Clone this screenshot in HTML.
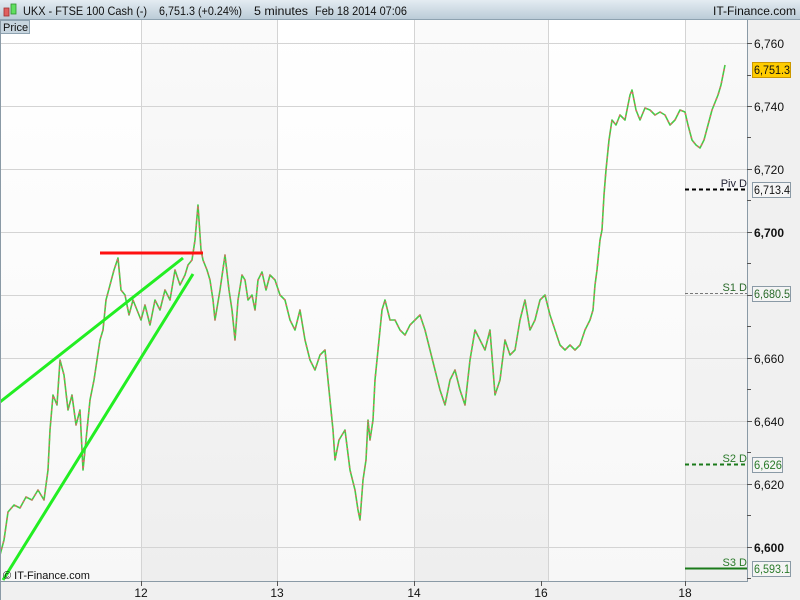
<!DOCTYPE html>
<html><head><meta charset="utf-8"><style>
body{margin:0;width:800px;height:600px;overflow:hidden;font-family:"Liberation Sans",sans-serif;background:#f0f0f0}
</style></head><body>
<svg width="800" height="600" xmlns="http://www.w3.org/2000/svg" style="display:block;font-family:'Liberation Sans',sans-serif">
<defs>
<linearGradient id="hd" x1="0" y1="0" x2="0" y2="1"><stop offset="0" stop-color="#e4ecf2"/><stop offset="1" stop-color="#b9cad6"/></linearGradient>
<linearGradient id="pl" x1="0" y1="0" x2="0" y2="1"><stop offset="0" stop-color="#ffffff"/><stop offset="1" stop-color="#f7f7f7"/></linearGradient>
<linearGradient id="sh" x1="0" y1="0" x2="0" y2="1"><stop offset="0" stop-color="#fafafa"/><stop offset="1" stop-color="#eeeeee"/></linearGradient>
</defs>
<rect x="0" y="0" width="800" height="600" fill="#f0f0f0"/>
<rect x="0" y="20" width="747" height="561" fill="url(#pl)"/>
<rect x="141" y="20" width="136" height="561" fill="url(#sh)"/>
<rect x="414" y="20" width="134" height="561" fill="url(#sh)"/>
<rect x="685" y="20" width="62" height="561" fill="url(#sh)"/>
<g stroke="#d4d4d4" stroke-width="1">
<line x1="0" y1="43.5" x2="747" y2="43.5"/><line x1="0" y1="106.5" x2="747" y2="106.5"/><line x1="0" y1="169.5" x2="747" y2="169.5"/><line x1="0" y1="232.5" x2="747" y2="232.5"/><line x1="0" y1="295.5" x2="747" y2="295.5"/><line x1="0" y1="358.5" x2="747" y2="358.5"/><line x1="0" y1="421.5" x2="747" y2="421.5"/><line x1="0" y1="484.5" x2="747" y2="484.5"/><line x1="0" y1="547.5" x2="747" y2="547.5"/>
<line x1="141.5" y1="20" x2="141.5" y2="581"/><line x1="277.5" y1="20" x2="277.5" y2="581"/><line x1="414.5" y1="20" x2="414.5" y2="581"/><line x1="548.5" y1="20" x2="548.5" y2="581"/><line x1="685.5" y1="20" x2="685.5" y2="581"/>
</g>
<rect x="0" y="0" width="800" height="20" fill="url(#hd)"/>
<line x1="0" y1="19.5" x2="800" y2="19.5" stroke="#8ea2b0"/>
<rect x="4" y="8" width="5" height="8" fill="#e06060" stroke="#a03030" stroke-width="0.8"/>
<rect x="11" y="4" width="5" height="10" fill="#60e060" stroke="#309030" stroke-width="0.8"/>
<text x="23" y="15" font-size="12" fill="#111" textLength="124" lengthAdjust="spacingAndGlyphs">UKX - FTSE 100 Cash (-)</text>
<text x="159" y="15" font-size="12" fill="#111" textLength="83" lengthAdjust="spacingAndGlyphs">6,751.3 (+0.24%)</text>
<text x="254" y="15" font-size="12" fill="#111" textLength="54" lengthAdjust="spacingAndGlyphs">5 minutes</text>
<text x="315" y="15" font-size="12" fill="#111" textLength="92" lengthAdjust="spacingAndGlyphs">Feb 18 2014 07:06</text>
<text x="713" y="15" font-size="12" fill="#111" textLength="83" lengthAdjust="spacingAndGlyphs">IT-Finance.com</text>
<rect x="0.5" y="20.5" width="29" height="13" fill="#c7d5df" stroke="#8ea2b0"/>
<text x="3" y="31" font-size="11" fill="#111">Price</text>
<g fill="none" stroke-linejoin="round">
<polyline stroke="#44cc44" stroke-width="1.6" points="0,555 4,540 8,512 14,505 20,508 26,497 32,500 38,490 44,500 48,470 50,430 53,395 57,405 60,360 64,375 68,410 72,395 76,425 80,410 83,470 86,440 90,400 94,380 97,360 100,340 103,330 106,300 110,285 114,270 118,258 121,290 125,295 129,315 133,300 137,310 141,320 145,305 150,325 155,300 160,310 165,290 170,300 175,270 180,285 185,275 188,265 192,260 195,240 198,205 201,250 203,260 207,270 210,280 213,300 215,320 220,290 225,255 229,290 232,310 235,340 238,300 242,275 245,280 248,300 252,295 255,310 258,280 262,272 266,290 270,275 275,280 280,295 285,300 290,320 295,330 300,310 305,340 310,360 315,370 320,355 325,350 328,380 330,400 333,430 335,460 339,440 345,430 350,470 355,490 358,510 360,520 363,480 366,460 368,420 370,440 373,420 375,380 378,350 382,310 385,300 390,320 395,320 400,330 405,335 410,325 415,320 420,315 425,330 430,350 435,370 440,390 445,405 450,380 455,370 460,390 465,405 470,360 475,330 480,340 485,350 490,330 495,395 500,380 505,340 510,355 515,350 520,320 525,300 530,330 535,320 540,300 545,295 550,315 555,330 560,345 565,350 570,345 575,350 580,345 585,330 590,320 593,310 595,285 597,270 600,240 602,230 604,195 606,170 609,140 612,120 616,125 620,115 625,120 630,95 632,90 636,110 640,120 645,108 650,110 655,115 660,112 665,115 670,125 675,120 680,110 685,112 688,125 692,140 696,145 700,148 704,140 708,125 712,110 716,100 718,95 721,85 723,75 725,65"/>
<polyline stroke="#e06666" stroke-width="1.4" stroke-dasharray="2 4" points="0,555 4,540 8,512 14,505 20,508 26,497 32,500 38,490 44,500 48,470 50,430 53,395 57,405 60,360 64,375 68,410 72,395 76,425 80,410 83,470 86,440 90,400 94,380 97,360 100,340 103,330 106,300 110,285 114,270 118,258 121,290 125,295 129,315 133,300 137,310 141,320 145,305 150,325 155,300 160,310 165,290 170,300 175,270 180,285 185,275 188,265 192,260 195,240 198,205 201,250 203,260 207,270 210,280 213,300 215,320 220,290 225,255 229,290 232,310 235,340 238,300 242,275 245,280 248,300 252,295 255,310 258,280 262,272 266,290 270,275 275,280 280,295 285,300 290,320 295,330 300,310 305,340 310,360 315,370 320,355 325,350 328,380 330,400 333,430 335,460 339,440 345,430 350,470 355,490 358,510 360,520 363,480 366,460 368,420 370,440 373,420 375,380 378,350 382,310 385,300 390,320 395,320 400,330 405,335 410,325 415,320 420,315 425,330 430,350 435,370 440,390 445,405 450,380 455,370 460,390 465,405 470,360 475,330 480,340 485,350 490,330 495,395 500,380 505,340 510,355 515,350 520,320 525,300 530,330 535,320 540,300 545,295 550,315 555,330 560,345 565,350 570,345 575,350 580,345 585,330 590,320 593,310 595,285 597,270 600,240 602,230 604,195 606,170 609,140 612,120 616,125 620,115 625,120 630,95 632,90 636,110 640,120 645,108 650,110 655,115 660,112 665,115 670,125 675,120 680,110 685,112 688,125 692,140 696,145 700,148 704,140 708,125 712,110 716,100 718,95 721,85 723,75 725,65"/>
</g>
<line x1="0" y1="402" x2="183" y2="258" stroke="#22ee22" stroke-width="3"/>
<line x1="3" y1="580" x2="193" y2="274" stroke="#22ee22" stroke-width="3"/>
<line x1="100" y1="253" x2="203" y2="253" stroke="#ff1010" stroke-width="3"/>
<line x1="685" y1="189.5" x2="747" y2="189.5" stroke="#000" stroke-width="2" stroke-dasharray="4 3"/>
<line x1="685" y1="293.5" x2="747" y2="293.5" stroke="#777" stroke-width="1" stroke-dasharray="3 2"/>
<line x1="685" y1="464.5" x2="747" y2="464.5" stroke="#1a7a1a" stroke-width="2" stroke-dasharray="4 3"/>
<line x1="685" y1="568.5" x2="747" y2="568.5" stroke="#1a7a1a" stroke-width="2"/>
<g font-size="11" text-anchor="end">
<text x="747" y="187" fill="#223">Piv D</text>
<text x="747" y="291" fill="#2a6a2a">S1 D</text>
<text x="747" y="462" fill="#2a7a2a">S2 D</text>
<text x="747" y="566" fill="#2a7a2a">S3 D</text>
</g>
<line x1="747.5" y1="20" x2="747.5" y2="582" stroke="#8a9aa6"/>
<line x1="0" y1="581.5" x2="748" y2="581.5" stroke="#8a9aa6"/>
<line x1="0.5" y1="20" x2="0.5" y2="600" stroke="#8a9aa6"/>
<g stroke="#555">
<line x1="747" y1="43.5" x2="752" y2="43.5"/><line x1="747" y1="75.5" x2="751" y2="75.5"/><line x1="747" y1="106.5" x2="752" y2="106.5"/><line x1="747" y1="137.5" x2="751" y2="137.5"/><line x1="747" y1="169.5" x2="752" y2="169.5"/><line x1="747" y1="200.5" x2="751" y2="200.5"/><line x1="747" y1="232.5" x2="752" y2="232.5"/><line x1="747" y1="263.5" x2="751" y2="263.5"/><line x1="747" y1="295.5" x2="752" y2="295.5"/><line x1="747" y1="326.5" x2="751" y2="326.5"/><line x1="747" y1="358.5" x2="752" y2="358.5"/><line x1="747" y1="389.5" x2="751" y2="389.5"/><line x1="747" y1="421.5" x2="752" y2="421.5"/><line x1="747" y1="452.5" x2="751" y2="452.5"/><line x1="747" y1="484.5" x2="752" y2="484.5"/><line x1="747" y1="515.5" x2="751" y2="515.5"/><line x1="747" y1="547.5" x2="752" y2="547.5"/><line x1="747" y1="578.5" x2="751" y2="578.5"/>
<line x1="141.5" y1="581" x2="141.5" y2="586"/><line x1="277.5" y1="581" x2="277.5" y2="586"/><line x1="414.5" y1="581" x2="414.5" y2="586"/><line x1="541.5" y1="581" x2="541.5" y2="586"/><line x1="685.5" y1="581" x2="685.5" y2="586"/>
</g>
<g font-size="12" fill="#111">
<text x="754" y="48">6,760</text><text x="754" y="111">6,740</text><text x="754" y="174">6,720</text>
<text x="754" y="237" font-weight="bold">6,700</text><text x="754" y="300">6,680</text><text x="754" y="363">6,660</text>
<text x="754" y="426">6,640</text><text x="754" y="489">6,620</text><text x="754" y="552" font-weight="bold">6,600</text>
</g>
<rect x="752.5" y="62.5" width="38" height="15" fill="#ffcc00" stroke="#cc9900"/>
<text x="754" y="74" font-size="12" fill="#111" textLength="36" lengthAdjust="spacingAndGlyphs">6,751.3</text>
<rect x="752.5" y="182.5" width="38" height="15" fill="#f4f4f4" stroke="#8a9aa6"/>
<text x="754" y="194" font-size="12" fill="#111" textLength="36" lengthAdjust="spacingAndGlyphs">6,713.4</text>
<rect x="752.5" y="286.5" width="38" height="15" fill="#f4f4f4" stroke="#8a9aa6"/>
<text x="754" y="298" font-size="12" fill="#2a6a2a" textLength="36" lengthAdjust="spacingAndGlyphs">6,680.5</text>
<rect x="752.5" y="457.5" width="30" height="15" fill="#f4f4f4" stroke="#8a9aa6"/>
<text x="754" y="469" font-size="12" fill="#2a7a2a" textLength="28" lengthAdjust="spacingAndGlyphs">6,626</text>
<rect x="752.5" y="561.5" width="38" height="15" fill="#f4f4f4" stroke="#8a9aa6"/>
<text x="754" y="573" font-size="12" fill="#2a7a2a" textLength="36" lengthAdjust="spacingAndGlyphs">6,593.1</text>
<g font-size="12" fill="#111" text-anchor="middle">
<text x="141" y="597">12</text><text x="277" y="597">13</text><text x="414" y="597">14</text><text x="541" y="597">16</text><text x="685" y="597">18</text>
</g>
<text x="3" y="579" font-size="11" fill="#111">© IT-Finance.com</text>
</svg>
</body></html>
